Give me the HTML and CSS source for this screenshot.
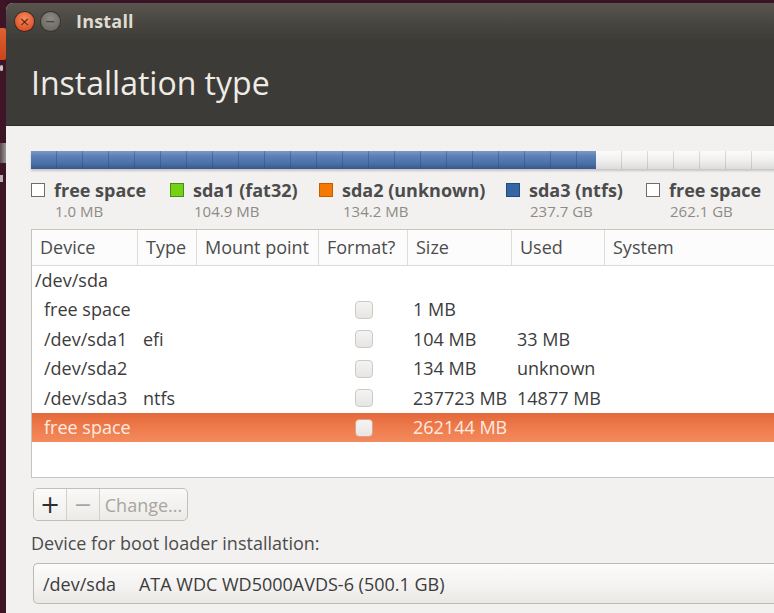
FILE: index.html
```html
<!DOCTYPE html>
<html>
<head>
<meta charset="utf-8">
<link rel="stylesheet" href="styles.css">
</head>
<body>
<div class="desktop">
  <div class="launcher">
    <div class="lic lic-orange"></div>
    <div class="lic lic-mark"></div>
    <div class="lic lic-gray"></div>
    <div class="lic lic-mark2"></div>
  </div>
  <div class="window">
    <div class="titlebar">
      <span class="wbtn close">×</span>
      <span class="wbtn minimize">−</span>
      <span class="wtitle">Install</span>
    </div>
    <div class="header">Installation type</div>
    <div class="content">
      <div class="pbar">
        <div class="pseg blue"></div>
        <div class="pseg free"></div>
      </div>
      <div class="legend">
        <div class="litem">
          <div class="lname"><span class="sw sw-free"></span>free space</div>
          <div class="lsize">1.0 MB</div>
        </div>
        <div class="litem">
          <div class="lname"><span class="sw sw-green"></span>sda1 (fat32)</div>
          <div class="lsize">104.9 MB</div>
        </div>
        <div class="litem">
          <div class="lname"><span class="sw sw-orange"></span>sda2 (unknown)</div>
          <div class="lsize">134.2 MB</div>
        </div>
        <div class="litem">
          <div class="lname"><span class="sw sw-blue"></span>sda3 (ntfs)</div>
          <div class="lsize">237.7 GB</div>
        </div>
        <div class="litem">
          <div class="lname"><span class="sw sw-free"></span>free space</div>
          <div class="lsize">262.1 GB</div>
        </div>
      </div>
      <div class="table">
        <div class="thead">
          <div class="th">Device</div>
          <div class="th">Type</div>
          <div class="th">Mount point</div>
          <div class="th">Format?</div>
          <div class="th">Size</div>
          <div class="th">Used</div>
          <div class="th last">System</div>
        </div>
        <div class="tbody">
          <div class="tr">
            <div class="td dev top">/dev/sda</div>
            <div class="td"></div><div class="td"></div><div class="td"></div>
            <div class="td"></div><div class="td"></div><div class="td"></div>
          </div>
          <div class="tr">
            <div class="td dev">free space</div>
            <div class="td"></div><div class="td"></div>
            <div class="td chk"><span class="cb"></span></div>
            <div class="td">1 MB</div><div class="td"></div><div class="td"></div>
          </div>
          <div class="tr">
            <div class="td dev">/dev/sda1</div>
            <div class="td">efi</div><div class="td"></div>
            <div class="td chk"><span class="cb"></span></div>
            <div class="td">104 MB</div><div class="td">33 MB</div><div class="td"></div>
          </div>
          <div class="tr">
            <div class="td dev">/dev/sda2</div>
            <div class="td"></div><div class="td"></div>
            <div class="td chk"><span class="cb"></span></div>
            <div class="td">134 MB</div><div class="td">unknown</div><div class="td"></div>
          </div>
          <div class="tr">
            <div class="td dev">/dev/sda3</div>
            <div class="td">ntfs</div><div class="td"></div>
            <div class="td chk"><span class="cb"></span></div>
            <div class="td">237723 MB</div><div class="td">14877 MB</div><div class="td"></div>
          </div>
          <div class="tr selected">
            <div class="td dev">free space</div>
            <div class="td"></div><div class="td"></div>
            <div class="td chk"><span class="cb"></span></div>
            <div class="td">262144 MB</div><div class="td"></div><div class="td"></div>
          </div>
        </div>
      </div>
      <div class="btngroup">
        <span class="bseg plus">+</span>
        <span class="bseg minus">−</span>
        <span class="bseg change">Change...</span>
      </div>
      <div class="bootlabel">Device for boot loader installation:</div>
      <div class="combo"><span class="cdev">/dev/sda</span><span>ATA WDC WD5000AVDS-6 (500.1 GB)</span></div>
    </div>
  </div>
</div>
</body>
</html>
```
FILE: styles.css
```css
html, body {
  margin: 0;
  padding: 0;
  width: 774px;
  height: 613px;
  overflow: hidden;
  background: #3a1425;
  font-family: "Open Sans", "Noto Sans", sans-serif;
}
.desktop {
  display: flex;
  height: 613px;
  padding-top: 3px;
  box-sizing: border-box;
}
.launcher {
  width: 6px;
  flex: none;
  display: flex;
  flex-direction: column;
  overflow: hidden;
  background: #3d1527;
  margin-top: -3px;
}
.lic { width: 6px; flex: none; }
.lic-orange { height: 32px; margin-top: 28px; background: linear-gradient(#e0612f, #c8451d); border-radius: 0 2px 2px 0; }
.lic-mark { width: 3px; height: 6px; margin-top: 5px; background: #c9c2c0; border-radius: 2px; }
.lic-gray { height: 20px; margin-top: 72px; background: linear-gradient(90deg, #5a4a50, #9a9594); }
.lic-mark2 { width: 3px; height: 7px; margin-top: 12px; background: #b8b0b0; }

.window {
  width: 800px;
  flex: none;
  border-radius: 7px 7px 0 0;
  overflow: hidden;
  background: #f2f1f0;
}
.titlebar {
  height: 36px;
  display: flex;
  align-items: center;
  background: linear-gradient(#58554e, #47453f 60%, #3e3d39);
  padding-left: 9px;
}
.wbtn {
  width: 19px;
  height: 19px;
  border-radius: 50%;
  display: flex;
  align-items: center;
  justify-content: center;
  line-height: 1;
  font-family: "DejaVu Sans", sans-serif;
}
.close {
  background: radial-gradient(circle at 50% 35%, #f58a5f, #e0552a 70%, #c94620);
  color: #5a2612;
  box-shadow: 0 0 0 1px #3a2a22;
  font-size: 13px;
}
.minimize {
  margin-left: 7px;
  background: radial-gradient(circle at 50% 35%, #8e8b84, #6f6c66 70%, #5e5b56);
  color: #3a3935;
  box-shadow: 0 0 0 1px #33322e;
  font-size: 13px;
}
.wtitle {
  margin-left: 16px;
  color: #dfdbd2;
  font-weight: bold;
  font-size: 18px;
  letter-spacing: 0.2px;
}
.header {
  height: 87px;
  background: #3c3b37;
  color: #efece6;
  font-size: 32px;
  line-height: 87px;
  padding-left: 25px;
  box-sizing: border-box;
  border-bottom: 1px solid #2e2d2a;
}
.content {
  padding: 25px 0 0 25px;
  color: #4c4c4c;
}
.pbar {
  display: flex;
  height: 18px;
  box-shadow: 0 2px 2px rgba(0,0,0,0.18);
}
.pseg.blue {
  width: 565px;
  background:
    repeating-linear-gradient(90deg, transparent 0 25px, rgba(40,60,100,0.35) 25px 26px),
    linear-gradient(#7c98c3, #5a7fb5 30%, #4a70a8 70%, #36588c);
}
.pseg.free {
  flex: 1;
  background:
    repeating-linear-gradient(90deg, transparent 0 25px, rgba(0,0,0,0.12) 25px 26px),
    linear-gradient(#fbfbfb, #f0f0f0 50%, #dcdcdc);
}
.legend {
  display: flex;
  margin-top: 11px;
}
.litem { flex: none; }
.litem:nth-child(1) { width: 139px; }
.litem:nth-child(2) { width: 149px; }
.litem:nth-child(3) { width: 187px; }
.litem:nth-child(4) { width: 140px; }
.lname {
  display: flex;
  align-items: center;
  font-weight: bold;
  font-size: 18px;
  line-height: 20px;
  height: 20px;
  color: #4c4c4c;
}
.sw {
  width: 12px;
  height: 12px;
  border: 1px solid;
  margin-right: 9px;
  flex: none;
}
.sw-free { background: #fff; border-color: #6e6d6a; }
.sw-green { background: #73d216; border-color: #4e8a10; }
.sw-orange { background: #f57900; border-color: #c25f00; }
.sw-blue { background: #3465a4; border-color: #244a7c; }
.lsize {
  margin-top: 3px;
  padding-left: 24px;
  font-size: 15px;
  line-height: 16px;
  height: 16px;
  color: #8e8b86;
}
.table {
  margin-top: 10px;
  border: 1px solid #c7c4bf;
  border-right: none;
  background: #fff;
}
.thead, .tr {
  display: grid;
  grid-template-columns: 106px 59px 122px 89px 104px 93px 1fr;
}
.thead {
  height: 35px;
  border-bottom: 1px solid #dcdad6;
  background: #fcfcfc;
}
.th {
  border-right: 1px solid #dedcd8;
  padding-left: 8px;
  font-size: 18px;
  line-height: 35px;
  color: #4c4c4c;
  white-space: nowrap;
  overflow: hidden;
}
.th.last { border-right: none; }
.tbody {
  height: 211px;
}
.tr {
  height: 29.4px;
  color: #3c3c3c;
}
.td {
  font-size: 18px;
  line-height: 29.4px;
  padding-left: 5px;
  white-space: nowrap;
}
.td.dev { padding-left: 12px; }
.td.dev.top { padding-left: 3px; }
.td.chk {
  display: flex;
  align-items: center;
  justify-content: center;
  padding-left: 0;
}
.cb {
  width: 16px;
  height: 16px;
  border: 1px solid #cdcac5;
  border-radius: 4px;
  background: linear-gradient(#f4f4f3, #e7e5e2);
}
.tr.selected {
  background: linear-gradient(#e4683a, #ee7b4c 50%, #f38a5d);
  color: #fdebe2;
}
.tr.selected .cb {
  border-color: #d9a48c;
  background: linear-gradient(#f6f4f2, #e8e5e2);
}
.btngroup {
  display: flex;
  margin-top: 10px;
  margin-left: 2px;
  width: max-content;
  height: 33px;
  border: 1px solid #c3bfb8;
  border-radius: 5px;
  overflow: hidden;
  background: linear-gradient(#f9f9f8, #ecebe8);
  box-sizing: border-box;
}
.bseg {
  display: flex;
  align-items: center;
  justify-content: center;
  font-size: 18px;
  color: #a8a5a0;
  border-right: 1px solid #d3d0cb;
}
.plus {
  width: 32px;
  color: #2e2e2e;
  font-size: 24px;
  font-family: "DejaVu Sans", sans-serif;
  background: linear-gradient(#fbfbfa, #efeeec);
}
.minus { width: 32px; font-size: 22px; font-family: "DejaVu Sans", sans-serif; }
.change { width: 87px; border-right: none; }
.bootlabel {
  margin-top: 10px;
  font-size: 18px;
  line-height: 24px;
  color: #4c4c4c;
}
.combo {
  margin-top: 8px;
  margin-left: 2px;
  height: 41px;
  box-sizing: border-box;
  border: 1px solid #bdb9b3;
  border-right: none;
  border-radius: 5px 0 0 5px;
  background: linear-gradient(#fbfbfa, #f3f2f0 60%, #e9e8e5);
  display: flex;
  align-items: center;
  padding-left: 9px;
  font-size: 18px;
  color: #3c3c3c;
}
.cdev { margin-right: 23px; }
```
